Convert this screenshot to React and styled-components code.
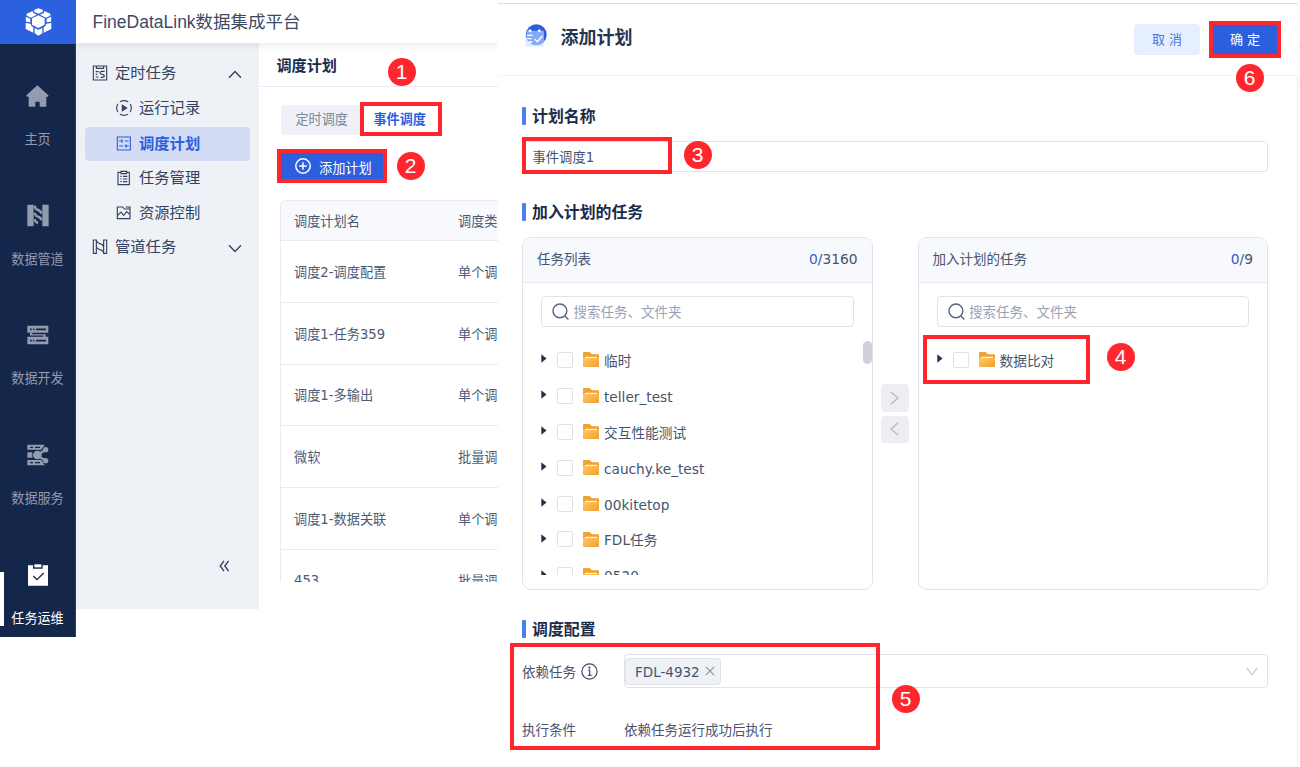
import { styled, createGlobalStyle, css } from 'styled-components';

const navItems = [
    { label: '主页', icon: <HomeIcon /> },
    { label: '数据管道', icon: <PipeIcon /> },
    { label: '数据开发', icon: <DevIcon /> },
    { label: '数据服务', icon: <ServiceIcon /> },
    { label: '任务运维', icon: <ClipboardIcon />, active: true },
];

const plans = [
    ['调度2-调度配置', '单个调'],
    ['调度1-任务359', '单个调'],
    ['调度1-多输出', '单个调'],
    ['微软', '批量调'],
    ['调度1-数据关联', '单个调'],
    ['453', '批量调'],
];

const folders = ['临时', 'teller_test', '交互性能测试', 'cauchy.ke_test', '00kitetop', 'FDL任务', '0520'];

const marks = [
    { x: 360, y: 102, w: 82, h: 34 },
    { x: 277, y: 149, w: 110, h: 34 },
    { x: 522, y: 137, w: 150, h: 37 },
    { x: 923, y: 335, w: 167, h: 49 },
    { x: 510, y: 643, w: 370, h: 107 },
    { x: 1209, y: 21, w: 72, h: 37 },
];

const steps = [
    { x: 387.5, y: 57.5 },
    { x: 396.5, y: 151.5 },
    { x: 683.5, y: 140.5 },
    { x: 1106.5, y: 342.5 },
    { x: 891.5, y: 684.5 },
    { x: 1235.5, y: 63.5 },
];

function App(){
    return(
        <Page>
            <GlobalStyle />
            <Rail>
                <Logo><LogoIcon /></Logo>
                {navItems.map((item) => (
                    <NavItem key={item.label} $active={item.active}>
                        <div className="icon">{item.icon}</div>
                        <div className="label">{item.label}</div>
                    </NavItem>
                ))}
            </Rail>
            <Workspace>
                <TopBar>FineDataLink数据集成平台</TopBar>
                <Columns>
                    <Sidebar />
                    <PlanList />
                </Columns>
            </Workspace>
            <Drawer />
            <Edge />
            {marks.map((m, i) => (
                <Mark key={i} $x={m.x} $y={m.y} $w={m.w} $h={m.h} />
            ))}
            {steps.map((s, i) => (
                <Step key={i} $x={s.x} $y={s.y}>{i + 1}</Step>
            ))}
        </Page>
    );
}

function Sidebar(){
    return(
        <SideBox>
            <MenuRow><TimerIcon /><span>定时任务</span><Chevron up /></MenuRow>
            <MenuRow $sub><RunIcon /><span>运行记录</span></MenuRow>
            <MenuRow $sub $active><PlanIcon /><span>调度计划</span></MenuRow>
            <MenuRow $sub><ListIcon /><span>任务管理</span></MenuRow>
            <MenuRow $sub><ResourceIcon /><span>资源控制</span></MenuRow>
            <MenuRow><PipeLineIcon /><span>管道任务</span><Chevron /></MenuRow>
            <Collapse>
                <svg width="11" height="12" viewBox="0 0 11 12" fill="none" stroke="#33425f" strokeWidth="1.4">
                    <path d="M5 .8 1.2 6 5 11.2M9.6 .8 5.8 6 9.6 11.2" />
                </svg>
            </Collapse>
        </SideBox>
    );
}

function PlanList(){
    return(
        <ListBox>
            <ListTitle>调度计划</ListTitle>
            <Tabs>
                <Tab>定时调度</Tab>
                <Tab $active>事件调度</Tab>
            </Tabs>
            <AddButton>
                <svg width="16" height="16" viewBox="0 0 16 16" fill="none" stroke="#fff" strokeWidth="1.5">
                    <circle cx="8" cy="8" r="7.2" />
                    <path d="M8 4.2v7.6M4.2 8h7.6" />
                </svg>
                <span>添加计划</span>
            </AddButton>
            <Table>
                <Row $head><div>调度计划名</div><div>调度类</div></Row>
                {plans.map(([name, type]) => (
                    <Row key={name}><div>{name}</div><div>{type}</div></Row>
                ))}
            </Table>
        </ListBox>
    );
}

function Drawer(){
    return(
        <DrawerBox>
            <DrawerHead>
                <CalendarIcon />
                <h1>添加计划</h1>
                <Button>取 消</Button>
                <Button $primary>确 定</Button>
            </DrawerHead>
            <DrawerBody>
                <SectionTitle>计划名称</SectionTitle>
                <NameInput>事件调度1</NameInput>
                <SectionTitle>加入计划的任务</SectionTitle>
                <Transfer>
                    <Panel title="任务列表" total="3160" items={folders} scroll />
                    <MoveButtons>
                        <Move><svg width="9" height="14" viewBox="0 0 9 14"><path d="M.7 .8 8 7 .7 13.2" /></svg></Move>
                        <Move><svg width="9" height="14" viewBox="0 0 9 14"><path d="M8.3 .8 1 7l7.3 6.2" /></svg></Move>
                    </MoveButtons>
                    <Panel title="加入计划的任务" total="9" items={['数据比对']} />
                </Transfer>
                <SectionTitle>调度配置</SectionTitle>
                <Field $height={34} $top={16}>
                    <label>
                        <span>依赖任务</span>
                        <svg width="17" height="17" viewBox="0 0 17 17" fill="none" stroke="#3d4d6b" strokeWidth="1.2">
                            <circle cx="8.5" cy="8.5" r="7.6" />
                            <path d="M7.2 7.2h1.5v5M6.8 12.4h3.8" />
                            <circle cx="8.4" cy="4.6" r=".5" fill="#3d4d6b" />
                        </svg>
                    </label>
                    <Select>
                        <Tag>
                            <span>FDL-4932</span>
                            <svg width="10" height="10" viewBox="0 0 10 10" fill="none" stroke="#8591a8" strokeWidth="1.1">
                                <path d="m.8 .8 8.4 8.4M9.2 .8.8 9.2" />
                            </svg>
                        </Tag>
                        <svg width="12" height="9" viewBox="0 0 12 9" fill="none" stroke="#c3c8d4" strokeWidth="1.2">
                            <path d="M.6 .6 6 7.8 11.4 .6" />
                        </svg>
                    </Select>
                </Field>
                <Field $height={82} $top={0}>
                    <label><span>执行条件</span></label>
                    <span>依赖任务运行成功后执行</span>
                </Field>
            </DrawerBody>
        </DrawerBox>
    );
}

function Panel({ title, total, items, scroll }){
    return(
        <PanelBox>
            <PanelHead>
                <span>{title}</span>
                <span className="count"><b>0</b>/{total}</span>
            </PanelHead>
            <Search>
                <svg width="17" height="17" viewBox="0 0 17 17" fill="none" stroke="#56637c" strokeWidth="1.4">
                    <circle cx="7.9" cy="7.9" r="6.9" />
                    <path d="m13 13 3.4 3.4" />
                </svg>
                搜索任务、文件夹
            </Search>
            <Tree>
                {items.map((name) => (
                    <TreeRow key={name}>
                        <svg className="caret" width="6" height="9" viewBox="0 0 6 9"><path d="M.3 .3 5.5 4.5.3 8.7z" fill="#1f3050" /></svg>
                        <div className="check" />
                        <FolderIcon />
                        <span>{name}</span>
                    </TreeRow>
                ))}
            </Tree>
            {scroll && <ScrollThumb />}
        </PanelBox>
    );
}

function LogoIcon(){
    return(
        <svg width="27" height="28" viewBox="73 23 81 84" fill="#fff">
            <path d="M100 29 113 24 127 29 125 35 113 40 101 35Z" />
            <path d="M96 32 98 38 108 43 91 52 78 46 78 40Z" />
            <path d="M131 32 129 38 118 43 136 52 149 46 149 40Z" />
            <path d="M75 49 89 55V66L76 64Z" />
            <path d="M152 49 138 55V66L151 64Z" />
            <path d="M75 68 90 70 92 76 98 81V97L75 86Z" />
            <path d="M152 68 137 70 135 76 129 81V97L152 86Z" />
            <path d="M102 83 113 88 125 83V99L113 106 102 99Z" />
            <path d="M113 45 132 54V73L113 83 94 73V54Z" />
        </svg>
    );
}

function HomeIcon(){
    return(
        <svg width="23" height="22" viewBox="79 256 69 66" fill="currentColor">
            <path d="M113 257 80 287Q79 291 83 291H87V319Q87 321 89 321H107V308Q107 306 109 306H118Q120 306 120 308V321H138Q140 321 140 319V291H145Q148 290 146 287Z" />
        </svg>
    );
}

function PipeIcon(){
    return(
        <svg width="22" height="23" viewBox="81 612 66 69" fill="currentColor">
            <path d="M82 614H101V679H82ZM127 614H146V679H127Z" />
            <path d="M104 617Q106 628 114 630T124 641M104 638Q106 648 114 650T124 661M104 658Q106 667 114 669" fill="none" stroke="currentColor" strokeWidth="7" />
        </svg>
    );
}

function DevIcon(){
    return(
        <svg width="22" height="20" viewBox="81 137 66 59" fill="currentColor">
            <path fillRule="evenodd" d="M82 139H145V160H82ZM90 147V152H95V147ZM99 147V152H103V147ZM108 147V152H138V147Z" />
            <path fillRule="evenodd" d="M82 172H145V194H82ZM90 181V186H95V181ZM99 181V186H103V181ZM108 181V186H138V181Z" />
            <path d="M90 160H97V164H137V174H130V168H90Z" />
        </svg>
    );
}

function ServiceIcon(){
    return(
        <svg width="22" height="22" viewBox="81 491 66 66" fill="currentColor">
            <path fillRule="evenodd" d="M82 493H134L124 508H82ZM90 499V503H99V499ZM105 499V503H120V499ZM82 539H124L134 555H82ZM90 545V549H99V545ZM105 545V549H120V545ZM82 516H97V532H82Z" />
            <circle cx="112" cy="524" r="13" />
            <circle cx="137" cy="508" r="8" />
            <circle cx="137" cy="541" r="8" />
            <path d="M113 523 137 508M113 526 137 541" stroke="currentColor" strokeWidth="7" />
        </svg>
    );
}

function ClipboardIcon(){
    return(
        <svg width="20" height="22" viewBox="84 852 60 66">
            <path d="M84 856H99V866H128V856H144V917H84Z" fill="#fff" />
            <path d="M103 853H124V862H103Z" fill="#fff" />
            <path d="m100 888 11 11 20-20" fill="none" stroke="#15264b" strokeWidth="4" />
        </svg>
    );
}

function TimerIcon(){
    return(
        <LineIcon viewBox="278 196 46 48">
            <path d="M281 199H321V241H281ZM290 199V206H312V199M288 216H297M288 224H293M288 232H297M315 215H307Q301 215 301 219T308 224Q314 225 314 229T307 233H303" />
        </LineIcon>
    );
}

function RunIcon(){
    return(
        <LineIcon viewBox="349 300 48 48">
            <circle cx="373" cy="324" r="22" strokeDasharray="26 8.56" strokeDashoffset="13" />
            <path d="M368 316 381 324 368 332Z" fill="currentColor" />
        </LineIcon>
    );
}

function PlanIcon(){
    return(
        <LineIcon viewBox="349 405 48 48">
            <path d="M353 408H392V447H353ZM358 420H369M367 415V425M375 420H387M358 435H371M375 435H387M379 430V440" />
        </LineIcon>
    );
}

function ListIcon(){
    return(
        <LineIcon viewBox="349 510 48 48">
            <path d="M364 517H355V554H389V517H381M364 514H381V521H364ZM362 529H366M370 529H383M362 537H366M370 537H383M362 545H366M370 545H383" />
        </LineIcon>
    );
}

function ResourceIcon(){
    return(
        <LineIcon viewBox="349 614 48 48">
            <path d="M353 620H369L374 626H391V655H353ZM354 645 364 635 372 645 381 634 391 643M378 620H391V626" />
        </LineIcon>
    );
}

function PipeLineIcon(){
    return(
        <LineIcon viewBox="278 719 46 48">
            <path d="M281 722H290V762H281ZM312 722H321V762H312ZM290 723Q292 731 301 733T312 743M290 742Q292 749 301 751T312 760" />
        </LineIcon>
    );
}

function Chevron({ up }){
    return(
        <svg className="chevron" width="14" height="9" viewBox="0 0 14 9" fill="none" stroke="#33425f" strokeWidth="1.3">
            <path d={up ? 'M1 7.8 7 1.5 13 7.8' : 'M1 1.2 7 7.5 13 1.2'} />
        </svg>
    );
}

function CalendarIcon(){
    return(
        <svg width="22" height="23" viewBox="74 71 66 69">
            <rect x="75" y="90" width="56" height="49" rx="4" fill="#e3ecff" />
            <circle cx="108" cy="103" r="31" fill="#2b5fde" />
            <path d="M79 91H131V124Q122 134 108 134 88 133 79 115Z" fill="#86a9f5" />
            <path d="M80 105H97M80 115H94M84 125H96" stroke="#fff" strokeWidth="4" />
            <path d="m103 116 8 8 15-17" fill="none" stroke="#fff" strokeWidth="4.5" />
            <circle cx="89" cy="91" r="4.5" fill="#fff" />
            <circle cx="117" cy="91" r="4.5" fill="#fff" />
        </svg>
    );
}

function FolderIcon(){
    return(
        <svg width="16" height="15" viewBox="0 0 16 15">
            <defs>
                <linearGradient id="folder" x1="0" y1="0" x2="1" y2="1">
                    <stop offset="0" stopColor="#ffc966" />
                    <stop offset="1" stopColor="#f0a02c" />
                </linearGradient>
            </defs>
            <path d="M1 0H6.5L9 2.2H15a1 1 0 0 1 1 1V8H0V1A1 1 0 0 1 1 0Z" fill="#f0a32e" />
            <rect x="2" y="4.8" width="12" height="2" fill="#fff3dc" />
            <path d="M0 6H16V14a1 1 0 0 1-1 1H1a1 1 0 0 1-1-1Z" fill="url(#folder)" />
        </svg>
    );
}

const GlobalStyle = createGlobalStyle`
    * {
        box-sizing: border-box;
    }
    body {
        margin: 0;
        background: #fff;
        font-family: "DejaVu Sans", "Noto Sans CJK SC", sans-serif;
        font-size: 13.5px;
        line-height: 20px;
        color: #46546f;
    }
    svg {
        flex-shrink: 0;
        display: block;
    }
`;

const Page = styled.div`
    position: relative;
    display: flex;
    align-items: flex-start;
    width: 1300px;
    height: 767px;
    overflow: hidden;
    white-space: nowrap;
`;

const Rail = styled.div`
    width: 76px;
    height: 637px;
    background: #15264b;
    flex-shrink: 0;
    border-right: 1px solid #2a3c62;
`;

const Logo = styled.div`
    display: flex;
    justify-content: center;
    height: 44px;
    padding-top: 8px;
    margin-right: -1px;
    background: #2b60de;
`;

const NavItem = styled.div`
    height: 119.7px;
    padding-top: 41px;
    display: flex;
    flex-direction: column;
    align-items: center;
    color: ${(props) => (props.$active ? '#fff' : '#939cae')};
    .icon{
        height: 22px;
        display: flex;
        align-items: center;
    }
    .label{
        margin-top: 22px;
        font-size: 13.1px;
        line-height: 22px;
    }
    ${(props) => props.$active && css`
        position: relative;
        height: 114px;
        &::before{
            content: '';
            position: absolute;
            left: 0;
            top: 49px;
            width: 3.5px;
            height: 54px;
            background: #fff;
        }
    `}
`;

const Workspace = styled.div`
    width: 422px;
    flex-shrink: 0;
`;

const TopBar = styled.div`
    position: relative;
    height: 43px;
    padding-left: 16.5px;
    line-height: 44px;
    font-family: "Liberation Sans", "Noto Sans CJK SC", sans-serif;
    font-size: 17.5px;
    color: #3c4a66;
    box-shadow: 0 2px 8px rgba(31, 48, 80, 0.1);
    clip-path: inset(0 0 -14px 0);
`;

const Columns = styled.div`
    display: flex;
`;

const SideBox = styled.div`
    display: flex;
    flex-direction: column;
    width: 183px;
    height: 566px;
    padding: 13px 9px 0;
    background: #eef1f6;
    flex-shrink: 0;
`;

const MenuRow = styled.div`
    display: flex;
    align-items: center;
    height: 34.8px;
    padding: 0 8px 0 ${(props) => (props.$sub ? '31px' : '7px')};
    gap: 7px;
    border-radius: 4px;
    font-size: 15.3px;
    color: ${(props) => (props.$active ? '#2b5fde' : '#33425f')};
    font-weight: ${(props) => (props.$active ? 'bold' : 'normal')};
    background: ${(props) => (props.$active ? '#d3dcf4' : 'transparent')};
    ${(props) => props.$active && css`
        margin-top: 1px;
        margin-bottom: -1px;
    `}
    .chevron{
        margin: 2px 0 0 auto;
    }
`;

const LineIcon = styled.svg`
    width: 16px;
    height: 16px;
    fill: none;
    stroke: currentColor;
    stroke-width: 3.4;
`;

const Collapse = styled.div`
    margin: auto 20px 37px auto;
`;

const ListBox = styled.div`
    display: flex;
    flex-direction: column;
    align-items: flex-start;
    flex: 1;
    height: 539px;
    overflow: hidden;
`;

const ListTitle = styled.div`
    width: 100%;
    height: 44px;
    padding-left: 17.5px;
    border-bottom: 1px solid #e8ebf1;
    font-size: 15.1px;
    font-weight: bold;
    line-height: 47px;
    color: #1b2b4b;
`;

const Tabs = styled.div`
    display: flex;
    margin: 18px 0 0 21.5px;
    height: 30px;
    border-radius: 4px;
    background: #eef1f6;
`;

const Tab = styled.div`
    width: 80px;
    padding-left: ${(props) => (props.$active ? '13px' : '15px')};
    font-size: 13.1px;
    line-height: 30px;
    color: ${(props) => (props.$active ? '#2b5fde' : '#7a869b')};
    background: ${(props) => (props.$active ? '#fff' : 'transparent')};
    font-weight: ${(props) => (props.$active ? 'bold' : 'normal')};
`;

const AddButton = styled.div`
    display: flex;
    align-items: center;
    gap: 8px;
    width: 104px;
    height: 28px;
    margin: 17px 0 0 21px;
    padding-left: 15px;
    background: #2b5fde;
    color: #fff;
    font-size: 13.2px;
    span{
        margin-top: 5px;
    }
`;

const Table = styled.div`
    align-self: stretch;
    flex: 1;
    margin: 20px 0 0 21px;
    border: 1px solid #e8ebf1;
    border-width: 1px 0 0 1px;
    border-radius: 6px 0 0 0;
    overflow: hidden;
`;

const Row = styled.div`
    display: flex;
    align-items: center;
    height: ${(props) => (props.$head ? '40px' : '61.8px')};
    border-bottom: 1px solid #e8ebf1;
    background: ${(props) => (props.$head ? '#f7f9fd' : '#fff')};
    font-size: 13.2px;
    line-height: normal;
    color: #4b5a75;
    div{
        padding-left: 13px;
    }
    div:first-child{
        width: 164px;
        flex-shrink: 0;
    }
`;

const DrawerBox = styled.div`
    width: 800px;
    height: 764px;
    margin-top: 3px;
    border-top: 1px solid #dcdde1;
    flex-shrink: 0;
    background: #fff;
`;

const DrawerHead = styled.div`
    display: flex;
    align-items: center;
    height: 72px;
    padding: 0 20px 1px 27px;
    border-bottom: 1px solid #f3f4f6;
    h1{
        flex: 1;
        margin: 0 0 7px 13.5px;
        font-size: 18px;
        font-weight: bold;
        line-height: normal;
        color: #25344f;
    }
    > svg{
        margin-bottom: 8px;
    }
`;

const Button = styled.div`
    width: 66px;
    height: 31px;
    margin-left: ${(props) => (props.$primary ? '12px' : '0')};
    border-radius: 4px;
    text-align: center;
    line-height: 32px;
    font-size: 13px;
    background: ${(props) => (props.$primary ? '#2b5fde' : '#e6efff')};
    color: ${(props) => (props.$primary ? '#fff' : '#4a74e0')};
`;

const DrawerBody = styled.div`
    height: 691px;
    padding: 30px 29px 0 24px;
    border-right: 1px solid #eceef2;
`;

const SectionTitle = styled.div`
    display: flex;
    align-items: center;
    height: 19px;
    font-size: 15.9px;
    font-weight: bold;
    line-height: normal;
    color: #1b2b4b;
    &::before{
        content: '';
        width: 3.5px;
        height: 18px;
        margin-right: 6.5px;
        border-radius: 1px;
        background: #4a7ff0;
    }
`;

const NameInput = styled.div`
    height: 31px;
    margin: 16px 0 30px;
    padding-left: 9.5px;
    border: 1px solid #e0e3eb;
    border-radius: 4px;
    font-size: 13.3px;
    line-height: 31px;
`;

const Transfer = styled.div`
    display: flex;
    justify-content: space-between;
    height: 353px;
    margin: 16px 0 29px;
`;

const PanelBox = styled.div`
    position: relative;
    width: 350.5px;
    flex-shrink: 0;
    border: 1px solid #e0e3eb;
    border-radius: 9px;
    overflow: hidden;
`;

const PanelHead = styled.div`
    display: flex;
    justify-content: space-between;
    height: 45px;
    padding: 0 14px;
    border-bottom: 1px solid #e6e9f0;
    background: #f7f9fd;
    line-height: 43px;
    b{
        font-weight: normal;
        color: #2b5fde;
    }
    .count{
        font-size: 13.8px;
    }
`;

const Search = styled.div`
    display: flex;
    align-items: center;
    gap: 4.5px;
    height: 31px;
    margin: 13px 18px 15px;
    padding-left: 10px;
    border: 1px solid #e0e3eb;
    border-radius: 4px;
    color: #98a2b5;
`;

const Tree = styled.div`
    height: 233px;
    padding-left: 18px;
    overflow: hidden;
`;

const TreeRow = styled.div`
    display: flex;
    align-items: center;
    height: 35.9px;
    .caret{
        margin: 0 10px 2px 0;
    }
    .check{
        width: 16px;
        height: 16px;
        margin-right: 10px;
        border: 1px solid #dfe2ea;
        border-radius: 2px;
    }
    span{
        margin: 2px 0 0 5px;
        font-size: 13.7px;
    }
`;

const ScrollThumb = styled.div`
    position: absolute;
    top: 103px;
    right: 0;
    width: 9px;
    height: 23px;
    border-radius: 5px;
    background: #ced1d9;
`;

const MoveButtons = styled.div`
    display: flex;
    flex-direction: column;
    justify-content: center;
    gap: 4px;
    width: 28px;
    margin-right: 1px;
`;

const Move = styled.div`
    display: flex;
    align-items: center;
    justify-content: center;
    height: 27.5px;
    border-radius: 4px;
    background: #eceef3;
    path{
        fill: none;
        stroke: #b3b9c6;
        stroke-width: 1.3;
    }
`;

const Field = styled.div`
    display: flex;
    align-items: center;
    height: ${(props) => props.$height}px;
    margin-top: ${(props) => props.$top}px;
    span{
        padding-top: 2px;
    }
    label{
        display: flex;
        align-items: center;
        gap: 5px;
        width: 102px;
    }
`;

const Select = styled.div`
    display: flex;
    align-items: center;
    justify-content: space-between;
    flex: 1;
    height: 34px;
    padding-right: 9px;
    border: 1px solid #e0e3eb;
    border-radius: 4px;
`;

const Tag = styled.div`
    display: flex;
    align-items: center;
    gap: 5px;
    height: 27px;
    padding: 0 5px 0 9px;
    border: 1px solid #dfe3ea;
    border-radius: 4px;
    background: #eef1f6;
`;

/* what stays visible of the page to the right of the drawer */
const Edge = styled.div`
    width: 2px;
    height: 44px;
    margin-top: 43px;
    border-bottom: 1px solid #e8ebf1;
    background: linear-gradient(#f2f3f6, #fff 9px);
`;

const Mark = styled.div`
    position: absolute;
    left: ${(props) => props.$x}px;
    top: ${(props) => props.$y}px;
    width: ${(props) => props.$w}px;
    height: ${(props) => props.$h}px;
    border: 4px solid #ff272d;
`;

const Step = styled.div`
    position: absolute;
    left: ${(props) => props.$x}px;
    top: ${(props) => props.$y}px;
    width: 28px;
    height: 28px;
    border-radius: 50%;
    background: #ff272d;
    color: #fff;
    font-family: "Liberation Sans", sans-serif;
    font-size: 21px;
    line-height: 28px;
    text-align: center;
`;

export default App;
